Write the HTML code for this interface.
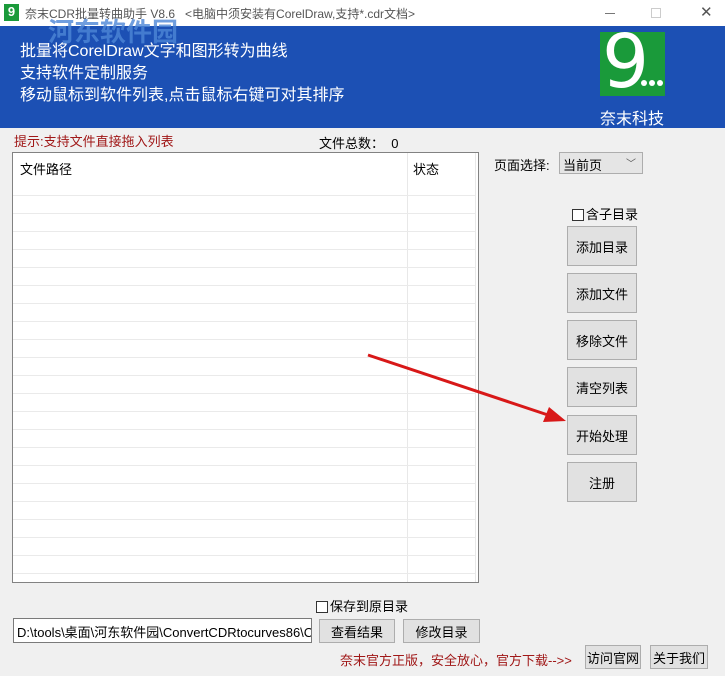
<!DOCTYPE html>
<html><head><meta charset="utf-8"><style>
*{margin:0;padding:0;box-sizing:border-box}
body{width:725px;height:676px;background:#f0f0f0;font-family:"Liberation Sans","Noto Sans CJK SC",sans-serif;font-size:12px;color:#000;position:relative;overflow:hidden}
.a{position:absolute;white-space:nowrap}
.btn{position:absolute;background:#e1e1e1;border:1px solid #adadad;display:flex;align-items:center;justify-content:center;font-size:12px}
.cb{display:inline-block;width:12px;height:12px;border:1px solid #333;background:#fff;vertical-align:-2px;margin-right:2px}
</style></head><body>
<div class="a" style="left:0;top:0;width:725px;height:26px;background:#fff"></div>
<div class="a" style="left:4px;top:4px;width:15px;height:17px;background:#1a9a3a;color:#fff;font-size:13px;font-weight:bold;text-align:center;line-height:16px">9</div>
<div class="a" style="left:25px;top:5px;color:#555;font-size:12px">奈末CDR批量转曲助手 V8.6&nbsp;&nbsp;&nbsp;&lt;电脑中须安装有CorelDraw,支持*.cdr文档&gt;</div>
<div class="a" style="left:605px;top:13px;width:10px;height:1px;background:#777"></div>
<div class="a" style="left:651px;top:8px;width:10px;height:10px;border:1px solid #ccc"></div>
<div class="a" style="left:700px;top:3px;color:#555;font-size:15px">✕</div>
<div class="a" style="left:0;top:26px;width:725px;height:102px;background:#1c50b4"></div>
<div class="a" style="left:48px;top:12px;color:#4d86d6;font-size:26px;font-weight:bold;opacity:.8">河东软件园</div>
<div class="a" style="left:20px;top:41px;color:#fff;font-size:16px;line-height:22px">批量将CorelDraw文字和图形转为曲线<br>支持软件定制服务<br>移动鼠标到软件列表,点击鼠标右键可对其排序</div>
<div class="a" style="left:600px;top:32px;width:65px;height:64px;background:#1a9a3a;overflow:hidden">
<div class="a" style="left:2px;top:-10px;color:#fff;font-size:74px;font-family:'DejaVu Sans',sans-serif;line-height:80px">9</div>
<div class="a" style="left:41px;top:48px;width:6px;height:6px;border-radius:50%;background:#fff"></div>
<div class="a" style="left:49px;top:48px;width:6px;height:6px;border-radius:50%;background:#fff"></div>
<div class="a" style="left:57px;top:48px;width:6px;height:6px;border-radius:50%;background:#fff"></div></div>
<div class="a" style="left:600px;top:105px;color:#fff;font-size:16px">奈末科技</div>
<div class="a" style="left:14px;top:131px;color:#a01818;font-size:13px">提示:支持文件直接拖入列表</div>
<div class="a" style="left:319px;top:133px;font-size:13px">文件总数：&nbsp;&nbsp;0</div>
<div class="a" style="left:12px;top:152px;width:467px;height:431px;background:#fff;border:1px solid #828282;overflow:hidden">
<div class="a" style="left:7px;top:6px;font-size:13px">文件路径</div>
<div class="a" style="left:400px;top:6px;font-size:13px">状态</div>
<div class="a" style="left:394px;top:0;width:1px;height:430px;background:#e8e8e8"></div>
<div class="a" style="left:462px;top:0;width:1px;height:430px;background:#e8e8e8"></div>
<div class="a" style="left:0;top:42px;width:462px;height:390px;background:repeating-linear-gradient(to bottom,#eaeaea 0,#eaeaea 1px,transparent 1px,transparent 18px)"></div>
</div>
<div class="a" style="left:494px;top:155px;font-size:13px">页面选择:</div>
<div class="a" style="left:559px;top:152px;width:84px;height:22px;background:#e5e5e5;border:1px solid #adadad;padding:2px 3px;font-size:13px">当前页<span style="position:absolute;right:6px;top:2px;color:#555;font-size:10px">﹀</span></div>
<div class="a" style="left:572px;top:204px;font-size:13px"><span class="cb"></span>含子目录</div>
<div class="btn" style="left:567px;top:226px;width:70px;height:40px;font-size:13px">添加目录</div>
<div class="btn" style="left:567px;top:273px;width:70px;height:40px;font-size:13px">添加文件</div>
<div class="btn" style="left:567px;top:320px;width:70px;height:40px;font-size:13px">移除文件</div>
<div class="btn" style="left:567px;top:367px;width:70px;height:40px;font-size:13px">清空列表</div>
<div class="btn" style="left:567px;top:415px;width:70px;height:40px;font-size:13px">开始处理</div>
<div class="btn" style="left:567px;top:462px;width:70px;height:40px;font-size:13px">注册</div>
<svg class="a" style="left:0;top:0" width="725" height="676"><line x1="368" y1="355" x2="548" y2="415" stroke="#d81818" stroke-width="3"/><polygon points="566,421 543,422 549,407" fill="#d81818"/></svg>
<div class="a" style="left:316px;top:596px;font-size:13px"><span class="cb"></span>保存到原目录</div>
<div class="a" style="left:13px;top:618px;width:299px;height:25px;background:#fff;border:1px solid #7a7a7a;padding:3px 3px;overflow:hidden;font-size:13px">D:\tools\桌面\河东软件园\ConvertCDRtocurves86\Cor</div>
<div class="btn" style="left:319px;top:619px;width:76px;height:24px;font-size:13px">查看结果</div>
<div class="btn" style="left:403px;top:619px;width:77px;height:24px;font-size:13px">修改目录</div>
<div class="a" style="left:340px;top:650px;color:#a01818;font-size:13px">奈末官方正版，安全放心，官方下载--&gt;&gt;</div>
<div class="btn" style="left:585px;top:645px;width:56px;height:24px;font-size:13px">访问官网</div>
<div class="btn" style="left:650px;top:645px;width:58px;height:24px;font-size:13px">关于我们</div>
</body></html>
